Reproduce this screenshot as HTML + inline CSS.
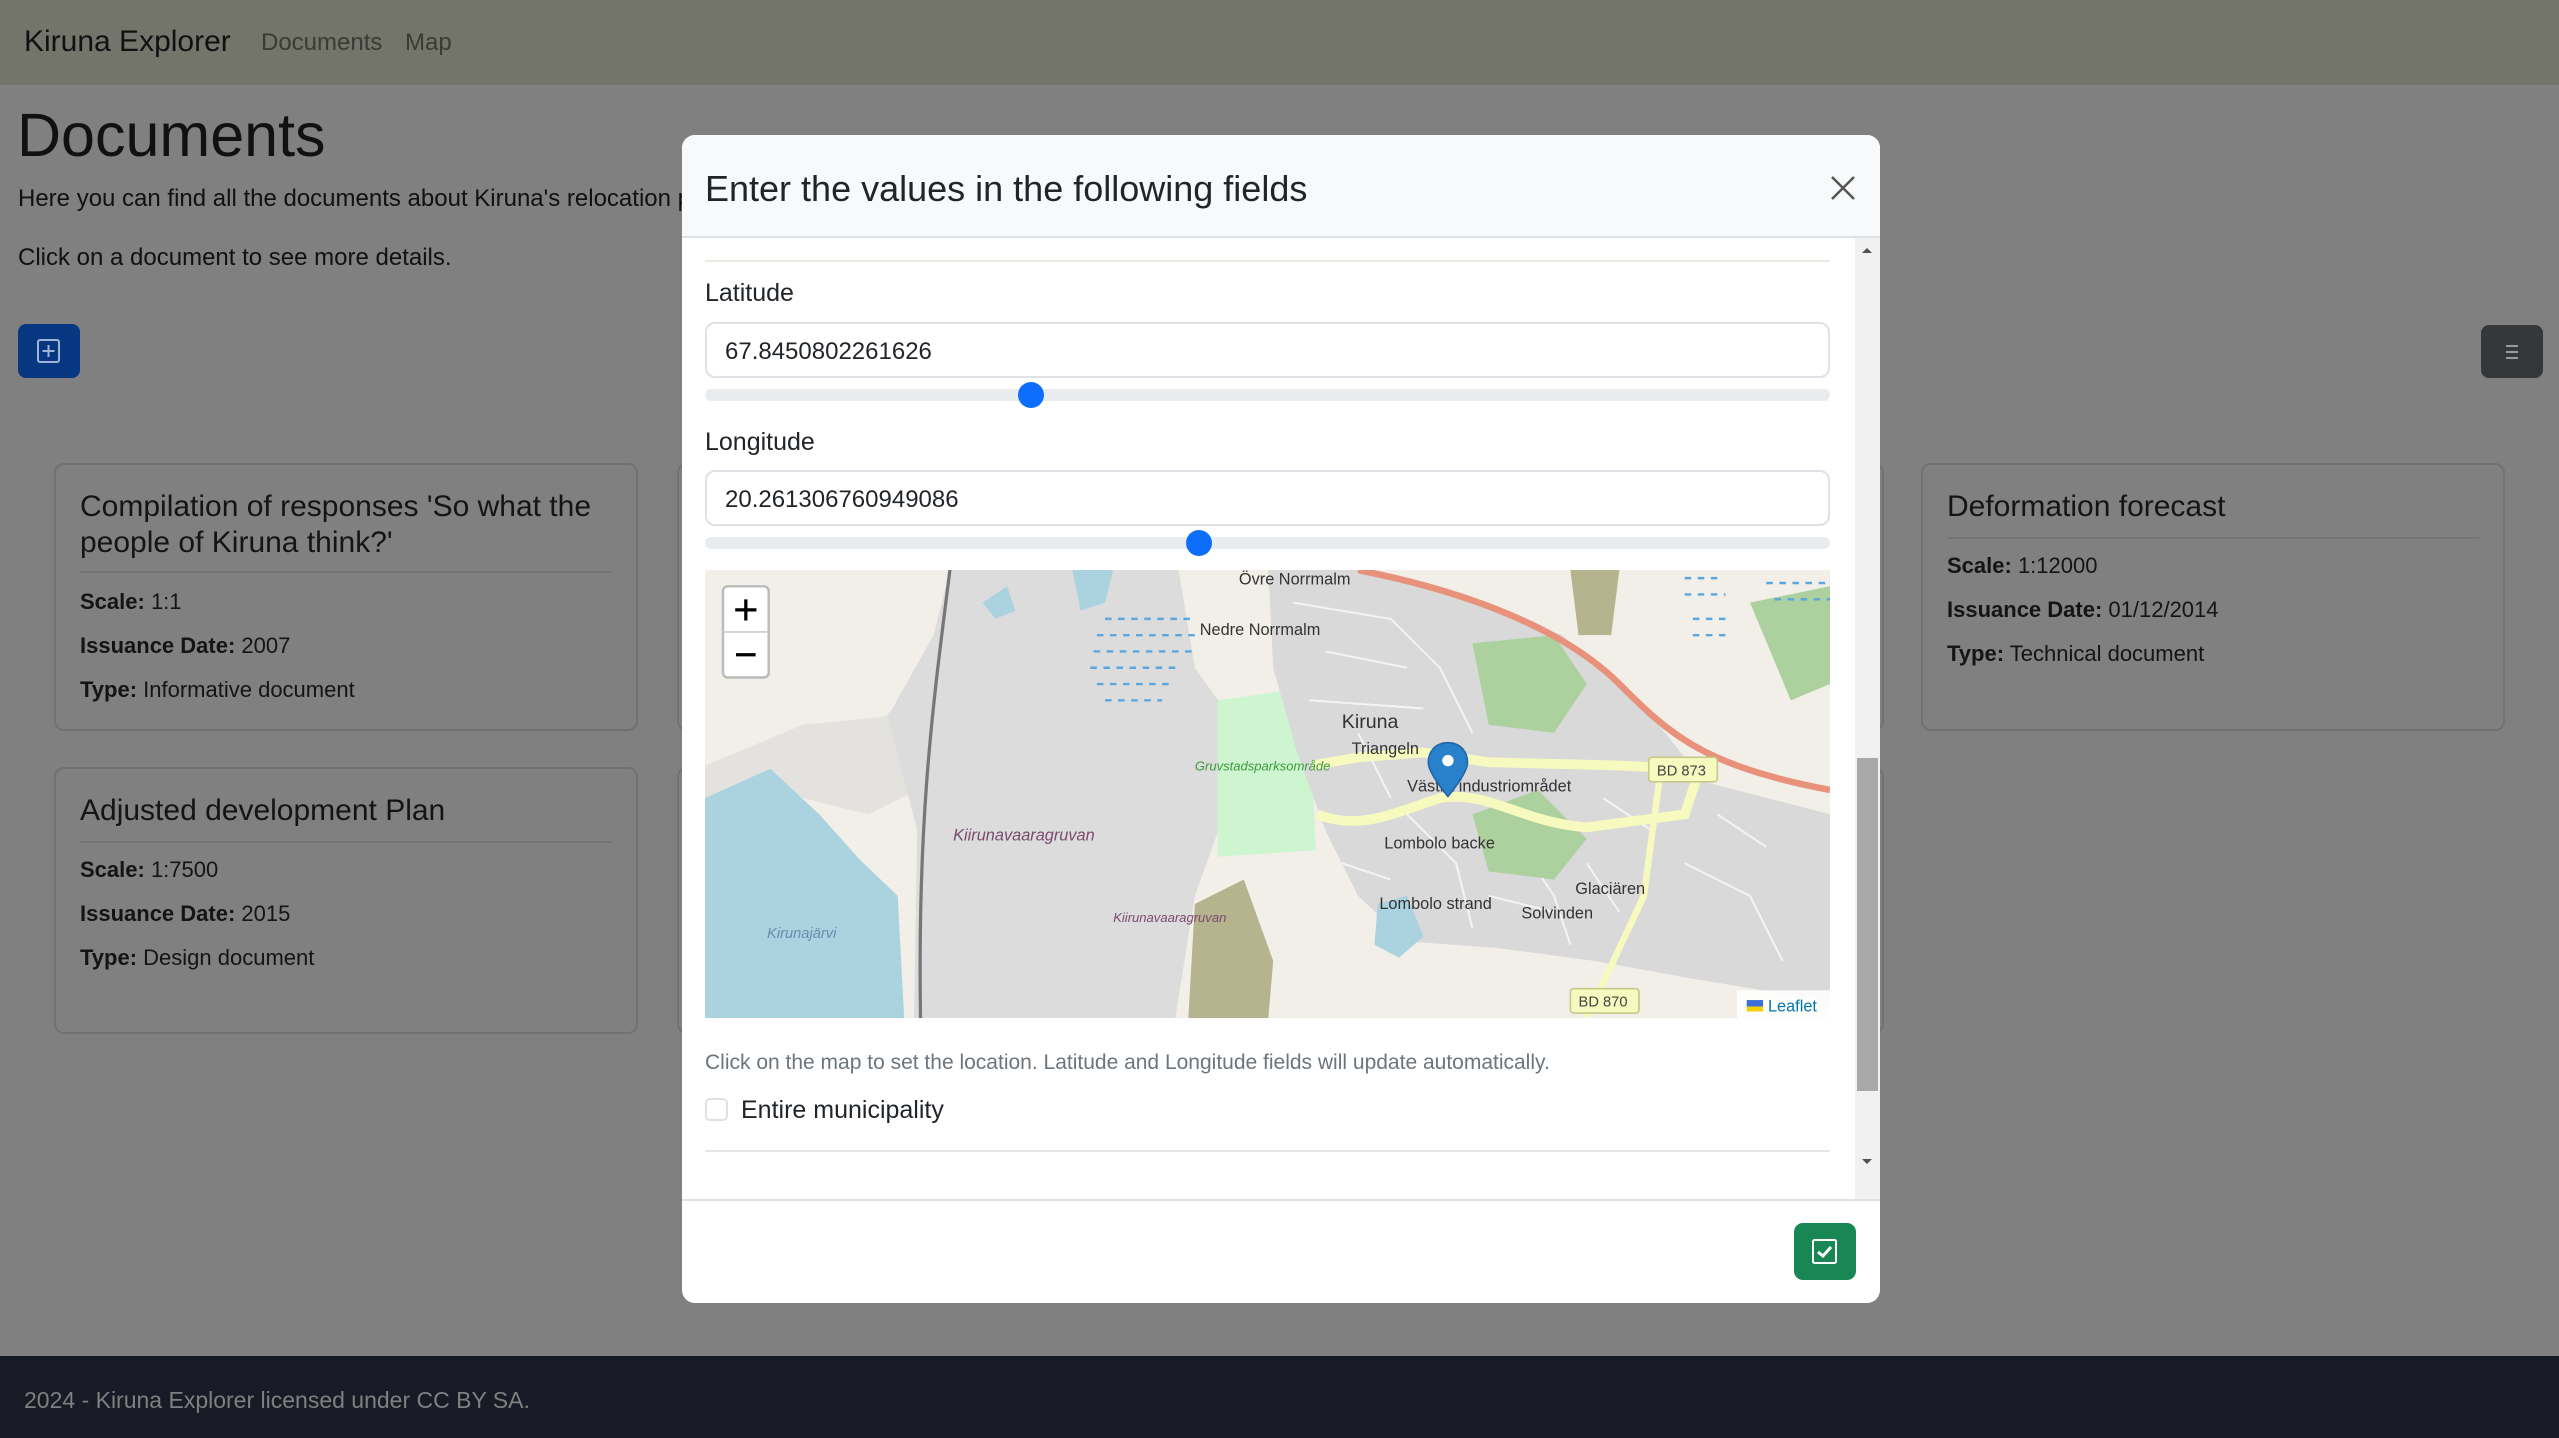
<!DOCTYPE html>
<html><head><meta charset="utf-8">
<style>
*{box-sizing:border-box;margin:0;padding:0}
body{width:2559px;height:1438px;overflow:hidden;background:#808080;font-family:"Liberation Sans",sans-serif;color:#111214;position:relative}
.abs{position:absolute}
.nav{left:0;top:0;width:2559px;height:85px;background:#73746a}
.card{position:absolute;width:584px;background:#808080;border:2px solid #717171;border-radius:10px}
.card h5{position:absolute;left:24px;font-size:30px;font-weight:normal;color:#131416;line-height:36px}
.card .hr{position:absolute;left:24px;right:24px;height:2px;background:#757575}
.card p{position:absolute;left:24px;font-size:22px;line-height:26px;color:#131416}
.modal{left:682px;top:135px;width:1198px;height:1168px;background:#fff;border-radius:13px;overflow:hidden}
.lbl{position:absolute;left:23px;font-size:25px;color:#212529}
.inp{position:absolute;left:23px;width:1125px;height:56px;border:2px solid #dee2e6;border-radius:10px;font-size:24px;padding:14px 18px;color:#212529}
.track{position:absolute;left:23px;width:1125px;height:12px;background:#e9ecef;border-radius:6px}
.thumb{position:absolute;width:26px;height:26px;border-radius:13px;background:#0d6efd}
</style></head><body>
<div class="abs nav"></div>
<div class="abs" style="left:24px;top:25px;font-size:30px;color:#111">Kiruna Explorer</div>
<div class="abs" style="left:261px;top:29px;font-size:24px;color:#3a3b35">Documents</div>
<div class="abs" style="left:405px;top:29px;font-size:24px;color:#3a3b35">Map</div>

<div class="abs" style="left:17px;top:100px;font-size:61px;color:#111">Documents</div>
<div class="abs" style="left:18px;top:185px;font-size:24px;color:#111;white-space:nowrap">Here you can find all the documents about Kiruna's relocation process.</div>
<div class="abs" style="left:18px;top:244px;font-size:24px;color:#111">Click on a document to see more details.</div>
<div class="abs" style="left:18px;top:324px;width:62px;height:54px;background:#063780;border-radius:8px">
<svg width="62" height="54" viewBox="0 0 62 54"><rect x="20" y="16" width="21" height="22" rx="2" fill="none" stroke="#9fb4d6" stroke-width="2"/><path d="M30.5 21v12M24.5 27h12" stroke="#9fb4d6" stroke-width="2"/></svg></div>
<div class="abs" style="left:2481px;top:325px;width:62px;height:53px;background:#35373b;border-radius:8px">
<svg width="62" height="53"><path d="M25 21h12M25 27h12M25 33h12" stroke="#9a9a9a" stroke-width="2"/></svg></div>

<div class="card" style="left:54px;top:463px;height:268px"><h5 style="top:24px">Compilation of responses 'So what the people of Kiruna think?'</h5><div class="hr" style="top:106px"></div><p style="top:124px"><b>Scale:</b> 1:1</p><p style="top:168px"><b>Issuance Date:</b> 2007</p><p style="top:212px"><b>Type:</b> Informative document</p></div>
<div class="card" style="left:54px;top:767px;height:267px"><h5 style="top:24px">Adjusted development Plan</h5><div class="hr" style="top:72px"></div><p style="top:88px"><b>Scale:</b> 1:7500</p><p style="top:132px"><b>Issuance Date:</b> 2015</p><p style="top:176px"><b>Type:</b> Design document</p></div>
<div class="card" style="left:677px;top:463px;height:268px"></div>
<div class="card" style="left:677px;top:767px;height:267px"></div>
<div class="card" style="left:1300px;top:463px;height:268px"></div>
<div class="card" style="left:1300px;top:767px;height:267px"></div>
<div class="card" style="left:1921px;top:463px;height:268px"><h5 style="top:24px">Deformation forecast</h5><div class="hr" style="top:72px"></div><p style="top:88px"><b>Scale:</b> 1:12000</p><p style="top:132px"><b>Issuance Date:</b> 01/12/2014</p><p style="top:176px"><b>Type:</b> Technical document</p></div>

<div class="abs" style="left:0;top:1356px;width:2559px;height:82px;background:#181a25"></div>
<div class="abs" style="left:24px;top:1387px;font-size:23px;color:#808081">2024 - Kiruna Explorer licensed under CC BY SA.</div>

<div class="abs modal">
 <div class="abs" style="left:0;top:0;width:1198px;height:103px;background:#f8f9fa;border-bottom:2px solid #dee2e6"></div>
 <div class="abs" style="left:23px;top:33px;font-size:36px;color:#212529">Enter the values in the following fields</div>
 <svg class="abs" style="left:1148px;top:40px" width="26" height="26"><path d="M2 2L24 24M24 2L2 24" stroke="#555" stroke-width="2.5"/></svg>
 <div class="abs" style="left:1173px;top:103px;width:25px;height:962px;background:#f1f1f1"></div>
 <div class="abs" style="left:1175px;top:623px;width:21px;height:333px;background:#a8a8a8"></div>
 <svg class="abs" style="left:1178px;top:110px" width="14" height="10"><path d="M2 8L7 3L12 8Z" fill="#505050"/></svg>
 <svg class="abs" style="left:1178px;top:1022px" width="14" height="10"><path d="M2 2L7 7L12 2Z" fill="#505050"/></svg>
 <div class="abs" style="left:23px;top:125px;width:1125px;height:2px;background:#ece9e0"></div>
 <div class="lbl" style="top:144px">Latitude</div>
 <div class="inp" style="top:187px">67.8450802261626</div>
 <div class="track" style="top:254px"></div><div class="thumb" style="left:336px;top:247px"></div>
 <div class="lbl" style="top:293px">Longitude</div>
 <div class="inp" style="top:335px">20.261306760949086</div>
 <div class="track" style="top:402px"></div><div class="thumb" style="left:504px;top:395px"></div>
 <svg class="abs" style="left:23px;top:435px" width="1125" height="448" viewBox="0 0 689 275" preserveAspectRatio="none" font-family="Liberation Sans,sans-serif">
  <rect width="689" height="275" fill="#f2efe9"/>
  <path d="M0 120L60 95L110 90L140 60L140 130L100 150L60 140L0 170Z" fill="#e4e2de"/>
  <path d="M150 0L290 0L300 60L325 95L318 150L300 200L288 275L128 275L130 160L112 90L140 40Z" fill="#dcdcdc"/>
  <path d="M0 140L40 122L70 150L95 178L118 200L122 275L0 275Z" fill="#aad3df"/>
  <path d="M314 80L370 72L374 172L314 176Z" fill="#cdf5cf"/>
  <path d="M300 205L330 190L348 240L345 275L296 275Z" fill="#b5b48e"/>
  <path d="M530 0L560 0L555 40L535 40Z" fill="#b5b48e"/>
  <path d="M345 0L405 0L470 20L525 40L580 90L612 130L689 150L689 265L600 250L545 240L485 232L430 228L400 200L380 160L362 110L348 60Z" fill="#d9d9d9"/>
  <g stroke="#f4f4f4" stroke-width="1.2" fill="none">
   <path d="M360 20L420 30L450 60L470 100M380 50L430 60M370 80L440 85M400 100L420 140M430 150L460 180L470 220M500 170L520 200L530 230M540 180L560 210M550 140L580 160M600 180L640 200L660 240M620 150L650 170M480 200L520 210M390 180L420 190"/>
  </g>
  <path d="M470 45L520 40L540 70L520 100L480 95Z" fill="#add19e"/>
  <path d="M470 150L510 135L540 165L520 190L480 185Z" fill="#add19e"/>
  <path d="M640 20L689 10L689 70L665 80Z" fill="#add19e"/>
  <path d="M412 205L430 200L440 225L425 238L410 230Z" fill="#aad3df"/>
  <path d="M170 20L185 10L190 25L178 30Z" fill="#aad3df"/>
  <path d="M225 0L250 0L245 20L230 25Z" fill="#aad3df"/>
  <g stroke="#5aa7e0" stroke-width="1.5" stroke-dasharray="4 4">
   <path d="M245 30L300 30M240 40L300 40M238 50L298 50M236 60L290 60M240 70L285 70M245 80L280 80"/>
   <path d="M600 5L620 5M600 15L625 15M605 30L625 30M605 40L625 40M650 8L689 8M655 18L689 18"/>
  </g>
  <path d="M400 0C450 10 520 30 560 70C590 100 610 120 689 135" fill="none" stroke="#e8927c" stroke-width="4"/>
  <path d="M372 120L400 115L440 112L480 118L560 120L600 122" fill="none" stroke="#f7fabf" stroke-width="6"/>
  <path d="M375 150C400 160 420 150 450 140C480 135 500 155 540 158L600 150L610 120" fill="none" stroke="#f7fabf" stroke-width="6"/>
  <path d="M585 125L575 200L540 275" fill="none" stroke="#f7fabf" stroke-width="4"/>
  <path d="M150 0C140 80 130 150 132 275" fill="none" stroke="#777" stroke-width="2"/>
  <g font-size="10" fill="#333">
   <text x="327" y="9">Övre Norrmalm</text><text x="303" y="40">Nedre Norrmalm</text>
   <text x="390" y="97" font-size="12">Kiruna</text><text x="396" y="113">Triangeln</text>
   <text x="430" y="136">Västra industriområdet</text><text x="416" y="171">Lombolo backe</text>
   <text x="413" y="208">Lombolo strand</text><text x="533" y="199">Glaciären</text><text x="500" y="214">Solvinden</text>
  </g>
  <text x="300" y="123" font-size="8" fill="#3c9a3c" font-style="italic">Gruvstadsparksområde</text>
  <text x="152" y="166" font-size="10" fill="#7a4a6e" font-style="italic">Kiirunavaaragruvan</text>
  <text x="250" y="216" font-size="8" fill="#7a4a6e" font-style="italic">Kiirunavaaragruvan</text>
  <text x="38" y="226" font-size="9" fill="#6a8ab0" font-style="italic">Kirunajärvi</text>
  <rect x="578" y="115" width="42" height="15" rx="2" fill="#f7fabf" stroke="#c8c88a"/><text x="583" y="126" font-size="9" fill="#444">BD 873</text>
  <rect x="530" y="257" width="42" height="15" rx="2" fill="#f7fabf" stroke="#c8c88a"/><text x="535" y="268" font-size="9" fill="#444">BD 870</text>
  <path d="M455 106C447 106 443 112 443 118C443 125 455 139 455 139C455 139 467 125 467 118C467 112 463 106 455 106Z" fill="#2a81cb" stroke="#2266a8"/>
  <circle cx="455" cy="117" r="3.5" fill="#fff"/>
  <rect x="11" y="10" width="28" height="56" rx="3" fill="#fff" stroke="#bbb" stroke-width="1.5"/>
  <path d="M11 38H39" stroke="#ccc"/>
  <path d="M25 18V31M18.5 24.5H31.5M19 52H31" stroke="#000" stroke-width="2"/>
  <rect x="632" y="258" width="57" height="17" fill="#fff" opacity=".85"/>
  <rect x="638" y="264" width="10" height="4" fill="#3a6fd8"/><rect x="638" y="268" width="10" height="3" fill="#f5d000"/>
  <text x="651" y="271" font-size="10" fill="#0078a8">Leaflet</text>
 </svg>
 <div class="abs" style="left:23px;top:916px;font-size:21px;color:#6c757d">Click on the map to set the location. Latitude and Longitude fields will update automatically.</div>
 <div class="abs" style="left:23px;top:963px;width:23px;height:23px;border:2px solid #dee2e6;border-radius:5px"></div>
 <div class="abs" style="left:59px;top:961px;font-size:25px;color:#212529">Entire municipality</div>
 <div class="abs" style="left:23px;top:1015px;width:1125px;height:2px;background:#e6e6e6"></div>
 <div class="abs" style="left:0;top:1064px;width:1198px;height:2px;background:#dee2e6"></div>
 <div class="abs" style="left:1112px;top:1088px;width:62px;height:57px;background:#198754;border-radius:9px">
  <svg width="62" height="57"><rect x="19" y="17" width="23" height="23" rx="1.5" fill="none" stroke="#fff" stroke-width="2"/><path d="M24 29L29 33L37 24" fill="none" stroke="#fff" stroke-width="3"/></svg>
 </div>
</div>
</body></html>
